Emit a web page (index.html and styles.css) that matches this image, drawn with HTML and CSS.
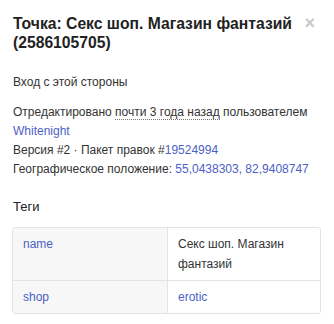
FILE: index.html
```html
<!DOCTYPE html>
<html lang="ru">

<head>
    <meta charset="UTF-8">
    <meta name="viewport" content="width=device-width, initial-scale=1.0">
    <title>Точка</title>
    <link rel="stylesheet" href="styles.css">
</head>

<body>
    <div class="sidebar">
        <div class="sidebar-head">
            <h2>Точка: Секс шоп. Магазин фантазий (2586105705)</h2>
            <span class="close">×</span>
        </div>

        <p class="note">Вход с этой стороны</p>

        <div class="details">
            <div>Отредактировано <abbr title="">почти 3 года назад</abbr> пользователем <a href="#">Whitenight</a></div>
            <div>Версия #2 · Пакет правок #<a href="#">19524994</a></div>
            <div>Географическое положение: <a href="#">55,0438303, 82,9408747</a></div>
        </div>

        <h4>Теги</h4>
        <table class="tags">
            <tr>
                <th><a href="#">name</a></th>
                <td>Секс шоп. Магазин фантазий</td>
            </tr>
            <tr>
                <th><a href="#">shop</a></th>
                <td><a href="#">erotic</a></td>
            </tr>
        </table>
    </div>
</body>

</html>
```

FILE: styles.css
```css
* {
    box-sizing: border-box;
}

body {
    margin: 0;
    font-family: "Liberation Sans", Arial, sans-serif;
    font-size: 12px;
    color: #333;
    background: #fff;
}

a {
    color: #4d5fc6;
    text-decoration: none;
}

.sidebar {
    padding: 14px 13px 0 13px;
}

.sidebar-head {
    display: flex;
    align-items: flex-start;
    justify-content: space-between;
}

.sidebar-head h2 {
    flex: 1;
    margin: 0;
    font-size: 15.7px;
    line-height: 19px;
    font-weight: bold;
    color: #222;
}

.close {
    color: #c8c8c8;
    font-size: 18px;
    line-height: 19px;
    font-weight: bold;
    margin: 0 6px 0 6px;
}

.note {
    margin: 21px 0 0 0;
    line-height: 19px;
}

.details {
    margin-top: 11px;
    line-height: 19px;
}

abbr {
    text-decoration: none;
    border-bottom: 1px dotted #777;
}

h4 {
    margin: 18px 0 0 0;
    font-size: 13px;
    font-weight: normal;
    line-height: 19px;
    color: #222;
}

.tags {
    width: 309px;
    margin-top: 11px;
    margin-left: -1px;
    border-collapse: separate;
    border-spacing: 0;
    border: 1px solid #e3e3e3;
    border-radius: 3px;
}

.tags th,
.tags td {
    text-align: left;
    vertical-align: top;
    font-weight: normal;
    padding: 6px 10px;
    line-height: 20px;
}

.tags th {
    width: 155px;
    background: #f7f7f7;
    border-right: 1px solid #e3e3e3;
}

.tags tr + tr th,
.tags tr + tr td {
    border-top: 1px solid #e3e3e3;
}
```
